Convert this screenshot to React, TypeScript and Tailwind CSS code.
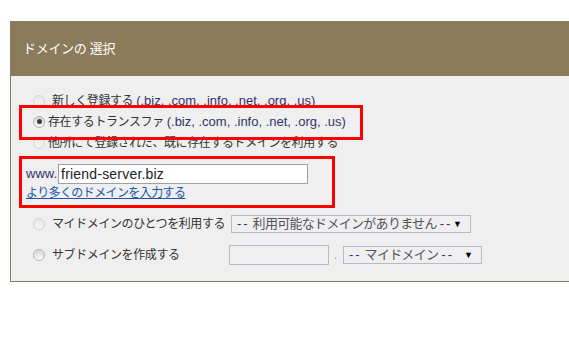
import type { ReactNode } from "react";

const FONT = "font-['Liberation_Sans','Noto_Sans_CJK_JP',sans-serif]";
const JP = "text-[12px] tracking-[-0.4px] text-[#333]";
const TLD = "text-[13px] tracking-normal text-[#33336a]";

function Radio({ checked, faded }: { checked?: boolean; faded?: boolean }) {
  return (
    <span
      className={
        faded
          ? "flex h-[12px] w-[12px] shrink-0 items-center justify-center rounded-full border border-[#d4d4d4] bg-gradient-to-b from-[#e6e6e6] to-[#f6f6f6]"
          : "flex h-[12px] w-[12px] shrink-0 items-center justify-center rounded-full border border-[#b4b4b4] bg-gradient-to-b from-[#d8d8d8] to-[#f8f8f8]"
      }
    >
      {checked ? <span className="h-[5px] w-[5px] rounded-full bg-[#3c3c3c]" /> : null}
    </span>
  );
}

function Row({ children, faded, checked, gap }: { children: ReactNode; faded?: boolean; checked?: boolean; gap: string }) {
  return (
    <div className="flex h-[21px] items-center pl-[22px]">
      <Radio checked={checked} faded={faded} />
      <span className={`${gap} whitespace-nowrap ${JP}`}>{children}</span>
    </div>
  );
}

function FakeSelect({ label, width }: { label: string; width: string }) {
  return (
    <div className={`flex h-[18px] ${width} shrink-0 items-center border border-[#b9b9c9] bg-[#efefef] pl-[5px] pr-[8px]`}>
      <span className="whitespace-nowrap text-[13px] tracking-[-0.7px] text-[#555]">
        <span className="tracking-[2px] text-[#33336a]">--</span> {label}{" "}
        <span className="tracking-[2px] text-[#33336a]">--</span>
      </span>
      <span className="ml-auto text-[9px] leading-none text-black">▼</span>
    </div>
  );
}

export default function App() {
  return (
    <div className={`min-h-[344px] w-[569px] overflow-hidden bg-white pl-[10px] pt-[21px] ${FONT}`}>
      <div className="w-[600px] border-b border-l border-[#8b7b5a] bg-[#efefef]">
        <div className="flex h-[55px] items-center bg-[#8b7b5a] pl-[12px] text-[13px] tracking-[-0.3px] text-white">
          ドメインの 選択
        </div>

        <div className="relative pb-[16px] pt-[14px]">
          <Row faded gap="ml-[7px]">
            新しく登録する <span className={TLD}>(.biz, .com, .info, .net, .org, .us)</span>
          </Row>
          <Row checked gap="ml-[3px]">
            存在するトランスファ <span className={TLD}>(.biz, .com, .info, .net, .org, .us)</span>
          </Row>
          <Row faded gap="ml-[3px]">
            他所にて登録された、既に存在するドメインを利用する
          </Row>

          <div className="pointer-events-none absolute left-[8px] top-[29px] h-[35px] w-[344px] border-[3px] border-[#ff0000]" />

          <div className="ml-[8px] mt-[3px] h-[52px] w-[316px] border-[3px] border-[#ff0000] pl-[4px] pt-[5px]">
            <div className="flex items-center">
              <span className="text-[13px] text-[#33336a]">www.</span>
              <div className="ml-[1px] flex h-[20px] w-[250px] items-center border border-[#a0a0a0] bg-white pl-[2px] text-[14px] tracking-[0.2px] text-[#222]">
                friend-server.biz
              </div>
            </div>
            <a className="mt-[1px] block text-[12px] leading-[17px] tracking-[-0.6px] text-[#1a55b0] underline" href="#">
              より多くのドメインを入力する
            </a>
          </div>

          <div className="mt-[6px] flex h-[20px] items-center pl-[22px]">
            <Radio faded />
            <span className={`ml-[7px] w-[179px] shrink-0 whitespace-nowrap ${JP}`}>マイドメインのひとつを利用する</span>
            <FakeSelect label="利用可能なドメインがありません" width="w-[240px]" />
          </div>

          <div className="mt-[11px] flex h-[20px] items-center pl-[22px]">
            <Radio />
            <span className={`ml-[7px] w-[177px] shrink-0 whitespace-nowrap ${JP}`}>サブドメインを作成する</span>
            <div className="h-[20px] w-[100px] shrink-0 border border-[#b9b9c9] bg-[#efefef]" />
            <span className="ml-[5px] w-[9px] text-[12px] text-[#c08a1a]">.</span>
            <FakeSelect label="マイドメイン" width="w-[139px]" />
          </div>
        </div>
      </div>
    </div>
  );
}
